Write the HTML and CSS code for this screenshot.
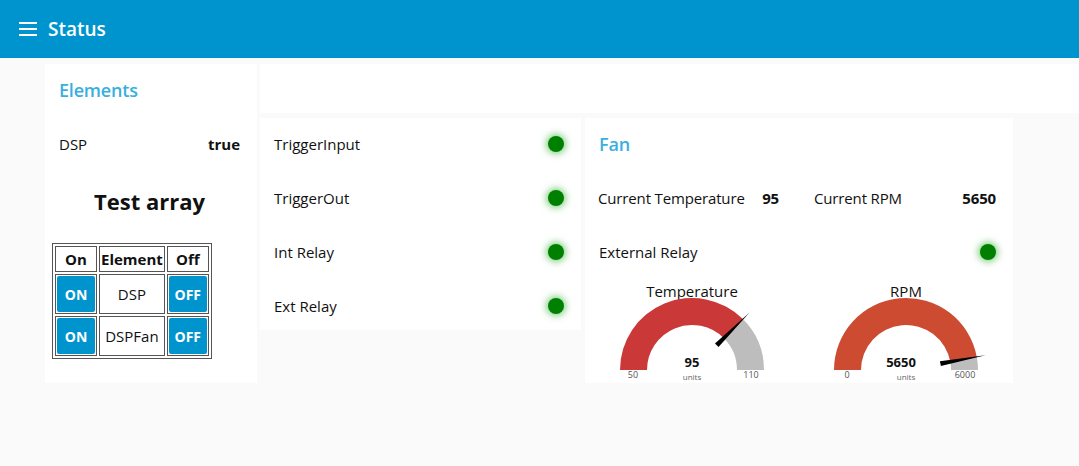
FILE: index.html
```html
<!DOCTYPE html>
<html lang="en">
<head>
    <meta charset="UTF-8">
    <meta name="viewport" content="width=device-width, initial-scale=1.0">
    <title>Status</title>
    <link rel="stylesheet" href="styles.css">
</head>
<body>
    <div class="toolbar">
        <svg class="menu-icon" width="20" height="16" viewBox="0 0 20 16">
            <rect x="1" y="1" width="18" height="2" fill="#fff"/>
            <rect x="1" y="7" width="18" height="2" fill="#fff"/>
            <rect x="1" y="13" width="18" height="2" fill="#fff"/>
        </svg>
        <span class="toolbar__title">Status</span>
    </div>

    <div class="main">
        <div class="card card--elements">
            <div class="row"><span class="group-title">Elements</span></div>
            <div class="row row--between"><span>DSP</span><b>true</b></div>
            <div class="row row--center"><h2 class="array-title">Test array</h2></div>
            <table class="test-table">
                <tr><th>On</th><th>Element</th><th>Off</th></tr>
                <tr>
                    <td><button class="btn">ON</button></td>
                    <td>DSP</td>
                    <td><button class="btn">OFF</button></td>
                </tr>
                <tr>
                    <td><button class="btn">ON</button></td>
                    <td>DSPFan</td>
                    <td><button class="btn">OFF</button></td>
                </tr>
            </table>
        </div>

        <div class="right-col">
            <div class="card card--blank"></div>
            <div class="lower">
                <div class="card card--leds">
                    <div class="row row--between"><span>TriggerInput</span><span class="led"></span></div>
                    <div class="row row--between"><span>TriggerOut</span><span class="led"></span></div>
                    <div class="row row--between"><span>Int Relay</span><span class="led"></span></div>
                    <div class="row row--between"><span>Ext Relay</span><span class="led"></span></div>
                </div>

                <div class="card card--fan">
                    <div class="row"><span class="group-title">Fan</span></div>
                    <div class="half-row">
                        <div class="row row--between half"><span>Current Temperature</span><b>95</b></div>
                        <div class="row row--between half half--right"><span>Current RPM</span><b>5650</b></div>
                    </div>
                    <div class="row row--between"><span>External Relay</span><span class="led"></span></div>
                    <div class="half-row">
                        <div class="gauge-cell">
                            <svg class="gauge" width="180" height="100" viewBox="0 0 180 100">
                                <text x="90" y="15" class="gauge__title">Temperature</text>
                                <g transform="translate(90,88)">
                                    <path d="M -72 0 A 72 72 0 0 1 50.91 -50.91 L 31.82 -31.82 A 45 45 0 0 0 -45 0 Z" fill="#ca3838"/>
                                    <path d="M 50.91 -50.91 A 72 72 0 0 1 72 0 L 45 0 A 45 45 0 0 0 31.82 -31.82 Z" fill="#bdbdbd"/>
                                    <polygon points="22.98,-26.52 26.52,-22.98 57.3,-57.3" fill="#000"/>
                                    <text x="0" y="-3" class="gauge__value">95</text>
                                    <text x="0" y="10" class="gauge__units">units</text>
                                    <text x="-59" y="8" class="gauge__limit">50</text>
                                    <text x="59" y="8" class="gauge__limit">110</text>
                                </g>
                            </svg>
                        </div>
                        <div class="gauge-cell">
                            <svg class="gauge" width="180" height="100" viewBox="0 0 180 100">
                                <text x="90" y="15" class="gauge__title">RPM</text>
                                <g transform="translate(90,88)">
                                    <path d="M -72 0 A 72 72 0 0 1 70.8 -13.12 L 44.25 -8.2 A 45 45 0 0 0 -45 0 Z" fill="#cc4b31"/>
                                    <path d="M 70.8 -13.12 A 72 72 0 0 1 72 0 L 45 0 A 45 45 0 0 0 44.25 -8.2 Z" fill="#bdbdbd"/>
                                    <polygon points="33.94,-8.86 34.86,-3.94 79.5,-14.7" fill="#000"/>
                                    <text x="-5" y="-3" class="gauge__value">5650</text>
                                    <text x="0" y="10" class="gauge__units">units</text>
                                    <text x="-59" y="8" class="gauge__limit">0</text>
                                    <text x="59" y="8" class="gauge__limit">6000</text>
                                </g>
                            </svg>
                        </div>
                    </div>
                </div>
            </div>
        </div>
    </div>
</body>
</html>
```

FILE: styles.css
```css
*{
    margin: 0;
    padding: 0;
    box-sizing: border-box;
}
body{
    background: #fafafa;
    font-family: "Open Sans", "Noto Sans", sans-serif;
    font-size: 15px;
    color: #111;
    width: 1079px;
    height: 466px;
    overflow: hidden;
}

.toolbar{
    height: 58px;
    background: #0094ce;
    display: flex;
    align-items: center;
    padding-left: 18px;
    color: #fff;
}
.menu-icon{
    margin-right: 10px;
}
.toolbar__title{
    font-size: 19px;
    font-weight: 600;
}

.main{
    display: flex;
    padding: 6px 0 0 45px;
    gap: 3px;
}
.card{
    background: #fff;
}
.card--elements{
    width: 212px;
    height: 319px;
    padding: 2px 0 0 0;
}
.right-col{
    flex: 1;
    display: flex;
    flex-direction: column;
    gap: 5px;
}
.card--blank{
    height: 49px;
}
.lower{
    display: flex;
    gap: 4px;
}
.card--leds{
    width: 321px;
    padding: 2px 0 0 0;
    display: flex;
    flex-direction: column;
    gap: 6px;
    height: 212px;
}
.card--fan{
    width: 428px;
    height: 265px;
    padding: 2px 0 0 0;
    display: flex;
    flex-direction: column;
    gap: 6px;
}

.row{
    height: 48px;
    display: flex;
    align-items: center;
    padding: 0 17px 0 14px;
}
.row--between{
    justify-content: space-between;
}
.row--center{
    justify-content: center;
    height: 54px;
}
.group-title{
    color: #39afe0;
    font-size: 18px;
    font-weight: 600;
    letter-spacing: -0.2px;
}
.array-title{
    font-size: 22px;
    font-weight: 700;
    color: #111;
}
.card--elements .row + .row{
    margin-top: 6px;
}

.test-table{
    margin: 15px 0 0 7px;
    border: 1px solid #555;
    border-spacing: 2px;
    text-align: center;
}
.test-table th,
.test-table td{
    border: 1px solid #555;
    padding: 1px;
    font-size: 15px;
}
.test-table th{
    font-weight: 700;
    height: 26px;
}
.test-table td{
    height: 40px;
}
.test-table th:nth-child(2){
    width: 64px;
}
.btn{
    display: block;
    width: 38px;
    height: 36px;
    background: #0094ce;
    color: #fff;
    border: none;
    border-radius: 2px;
    font-family: "Open Sans", "Noto Sans", sans-serif;
    font-size: 14px;
    font-weight: 700;
}

.led{
    width: 16px;
    height: 16px;
    border-radius: 50%;
    background: #008000;
    box-shadow: 0 0 7px 2px rgba(0, 160, 0, 0.5);
}

.half-row{
    display: flex;
}
.half{
    width: 214px;
    padding: 0 20px 0 13px;
    letter-spacing: -0.15px;
}
.half--right{
    padding: 0 17px 0 15px;
}
.gauge-cell{
    width: 214px;
    display: flex;
    justify-content: center;
}
.gauge text{
    font-family: "Open Sans", "Noto Sans", sans-serif;
    text-anchor: middle;
}
.gauge__title{
    font-size: 15px;
    fill: #111;
}
.gauge__value{
    font-size: 13px;
    font-weight: 700;
    fill: #111;
}
.gauge__units{
    font-size: 8px;
    fill: #666;
}
.gauge__limit{
    font-size: 9px;
    fill: #555;
}
```
